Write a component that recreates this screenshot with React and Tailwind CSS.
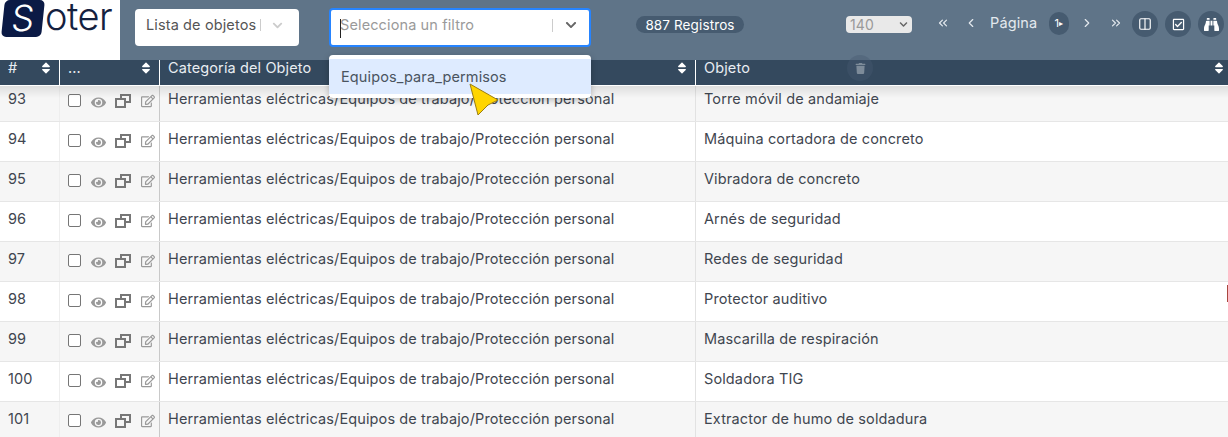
import { FaEye, FaRegEdit, FaSort, FaTrash, FaBinoculars, FaChevronDown, FaRegCheckSquare } from "react-icons/fa";
import { LuColumns2, LuChevronLeft, LuChevronRight, LuChevronsLeft, LuChevronsRight } from "react-icons/lu";

const CATEGORY = "Herramientas eléctricas/Equipos de trabajo/Protección personal";

const rows = [
    [93, "Torre móvil de andamiaje"],
    [94, "Máquina cortadora de concreto"],
    [95, "Vibradora de concreto"],
    [96, "Arnés de seguridad"],
    [97, "Redes de seguridad"],
    [98, "Protector auditivo"],
    [99, "Mascarilla de respiración"],
    [100, "Soldadora TIG"],
    [101, "Extractor de humo de soldadura"],
];

function CloneIcon() {
    return (
        <svg width="16" height="14" viewBox="0 0 16 14" className="text-[#777]">
            <path d="M5 0h11v9h-5V7h3V2H7v2H5z" fill="currentColor" />
            <path d="M0 4h11v10H0zM2 6v6h7V6z" fill="currentColor" fillRule="evenodd" />
        </svg>
    );
}

function RoundButton({ children }) {
    return (
        <button className="flex h-[26px] w-[26px] items-center justify-center rounded-full bg-[#465b70] text-white">
            {children}
        </button>
    );
}

function HeaderCell({ label, className }) {
    return (
        <div className={`flex items-start justify-between border-r border-white pl-2 ${className}`}>
            <span className="leading-[16px]">{label}</span>
            <FaSort className="mt-[1px] text-[14px] text-white" />
        </div>
    );
}

function Row({ id, name, striped, first }) {
    const textTop = first ? "pt-[4px]" : "pt-[8px]";
    return (
        <div
            className={`grid grid-cols-[60px_100px_536px_1fr] border-b border-[#e6e6e6] ${first ? "h-[36px]" : "h-[40px]"} ${striped ? "bg-[#f6f6f6]" : "bg-white"}`}
        >
            <div className={`border-r border-[#eeeeee] pl-2 ${textTop}`}>{id}</div>
            <div className={`flex items-start border-r border-[#c9c9c9] pl-2 ${first ? "pt-[8px]" : "pt-[12px]"}`}>
                <span className="h-[13px] w-[13px] shrink-0 rounded-[2px] border border-[#767676] bg-white" />
                <FaEye className="ml-[10px] mt-[1px] shrink-0 text-[15px] text-[#999]" />
                <span className="ml-[9px] shrink-0"><CloneIcon /></span>
                <FaRegEdit className="ml-[10px] shrink-0 text-[14px] text-[#999]" />
            </div>
            <div className={`border-r border-[#e2e2e2] pl-2 ${textTop}`}>{CATEGORY}</div>
            <div className={`pl-2 ${textTop}`}>{name}</div>
        </div>
    );
}

export default function App() {
    return (
        <div className="relative h-[437px] w-[1228px] overflow-hidden bg-white font-['Inter',sans-serif] text-[14.5px] leading-[18px] tracking-[0.12px] text-[#3f4650]">
            <header className="flex h-[60px] bg-[#5f7488]">
                <div className="relative h-[60px] w-[120px] shrink-0 bg-white">
                    <div className="absolute left-[3px] top-0 flex h-[37px] w-[40px] -skew-x-6 items-center justify-center rounded-[5px] bg-[#0b1a45]">
                        <span className="text-[36px] font-light leading-[37px] text-white">S</span>
                    </div>
                    <span className="absolute left-[45px] top-0 text-[38px] font-light leading-[33px] tracking-[-0.5px] text-[#14213f]">oter</span>
                </div>
                <div className="ml-[15px] mt-[9px] flex h-[37px] w-[164px] items-center rounded-[4px] bg-white pb-[5px] pl-[11px] text-[#555]">
                    <span className="whitespace-nowrap">Lista de objetos</span>
                    <span className="ml-[4px] h-[12px] w-px bg-[#ccc]" />
                    <FaChevronDown className="ml-[11px] text-[11px] text-[#ccc]" />
                </div>
                <div className="ml-[30px] mt-[8px] flex h-[39px] w-[262px] items-center rounded-[4px] border-2 border-[#2684ff] bg-white pb-[5px] pl-[9px] text-[#9a9a9a]">
                    <span className="flex-1 whitespace-nowrap">Selecciona un filtro</span>
                    <span className="h-[13px] w-px bg-[#ccc]" />
                    <FaChevronDown className="mx-[12px] text-[12px] text-[#666]" />
                </div>
                <div className="ml-[45px] mt-[16px] flex h-[17px] w-[108px] items-center justify-center rounded-full bg-[#465b70] text-[13.5px] text-white">887 Registros</div>
                <div className="ml-[102px] mt-[16px] flex h-[17px] w-[66px] items-center justify-between rounded-[4px] bg-[#e9e9e9] pl-1 pr-[4px] text-[14px] text-[#999]">
                    140
                    <FaChevronDown className="text-[9px] text-[#666]" />
                </div>
                <div className="ml-[24px] mt-[11px] flex h-[24px] items-center text-[#e4e9ee]">
                    <LuChevronsLeft className="text-[14px]" />
                    <LuChevronLeft className="ml-[14px] text-[14px]" />
                    <span className="ml-[12px]">Página</span>
                    <span className="ml-[12px] flex h-[23px] w-[20px] items-center justify-center rounded-full bg-[#465b70] text-[11px] tracking-[0.5px] text-white">1<span className="text-[8px]">▸</span></span>
                    <LuChevronRight className="ml-[11px] text-[14px]" />
                    <LuChevronsRight className="ml-[15px] text-[14px]" />
                </div>
                <div className="ml-[9px] mt-[11px] flex gap-[7px]">
                    <RoundButton><LuColumns2 className="text-[14px]" /></RoundButton>
                    <RoundButton><FaRegCheckSquare className="text-[13px]" /></RoundButton>
                    <RoundButton><FaBinoculars className="text-[15px]" /></RoundButton>
                </div>
            </header>
            <div className="grid h-[26px] grid-cols-[60px_100px_536px_1fr] border-b border-white bg-[#34495e] text-[#e8edf2]">
                <HeaderCell label="#" className="pr-[6px]" />
                <HeaderCell label="..." className="pr-[6px]" />
                <HeaderCell label="Categoría del Objeto" className="pr-[6px]" />
                <HeaderCell label="Objeto" className="border-r-0 pr-[2px]" />
            </div>
            <div className="relative">
                {rows.map(([id, name], i) => (
                    <Row key={id} id={id} name={name} striped={i % 2 === 0} first={i === 0} />
                ))}
                <div className="absolute inset-x-0 top-0 h-[12px] bg-gradient-to-b from-black/10 to-transparent" />
            </div>

            {/* open menu of the filter select */}
            <div className="absolute left-[329px] top-[55px] w-[262px] rounded-[4px] bg-white py-[4px] shadow-[0_2px_6px_rgba(0,0,0,0.25)]">
                <div className="flex h-[35px] items-center bg-[#deebff] pl-[12px] text-[#4a5460]">Equipos_para_permisos</div>
            </div>
            <div className="absolute left-[847px] top-[55px] flex h-[26px] w-[26px] items-center justify-center rounded-full bg-[#465b70]/40">
                <FaTrash className="text-[11px] text-[#7d8b99]" />
            </div>
            <span className="absolute left-[340px] top-[19px] h-[19px] w-px bg-[#222]" />
            <svg className="absolute left-[469px] top-[83px]" width="32" height="33" viewBox="0 0 32 33">
                <path d="M1 1 L29 17 L19 22 L9 32 Z" fill="#ffd500" stroke="#9a7d10" strokeWidth="1" strokeLinejoin="round" />
            </svg>
            <span className="absolute left-[1227px] top-[285px] h-[17px] w-px bg-[#a8473f]" />
        </div>
    );
}
